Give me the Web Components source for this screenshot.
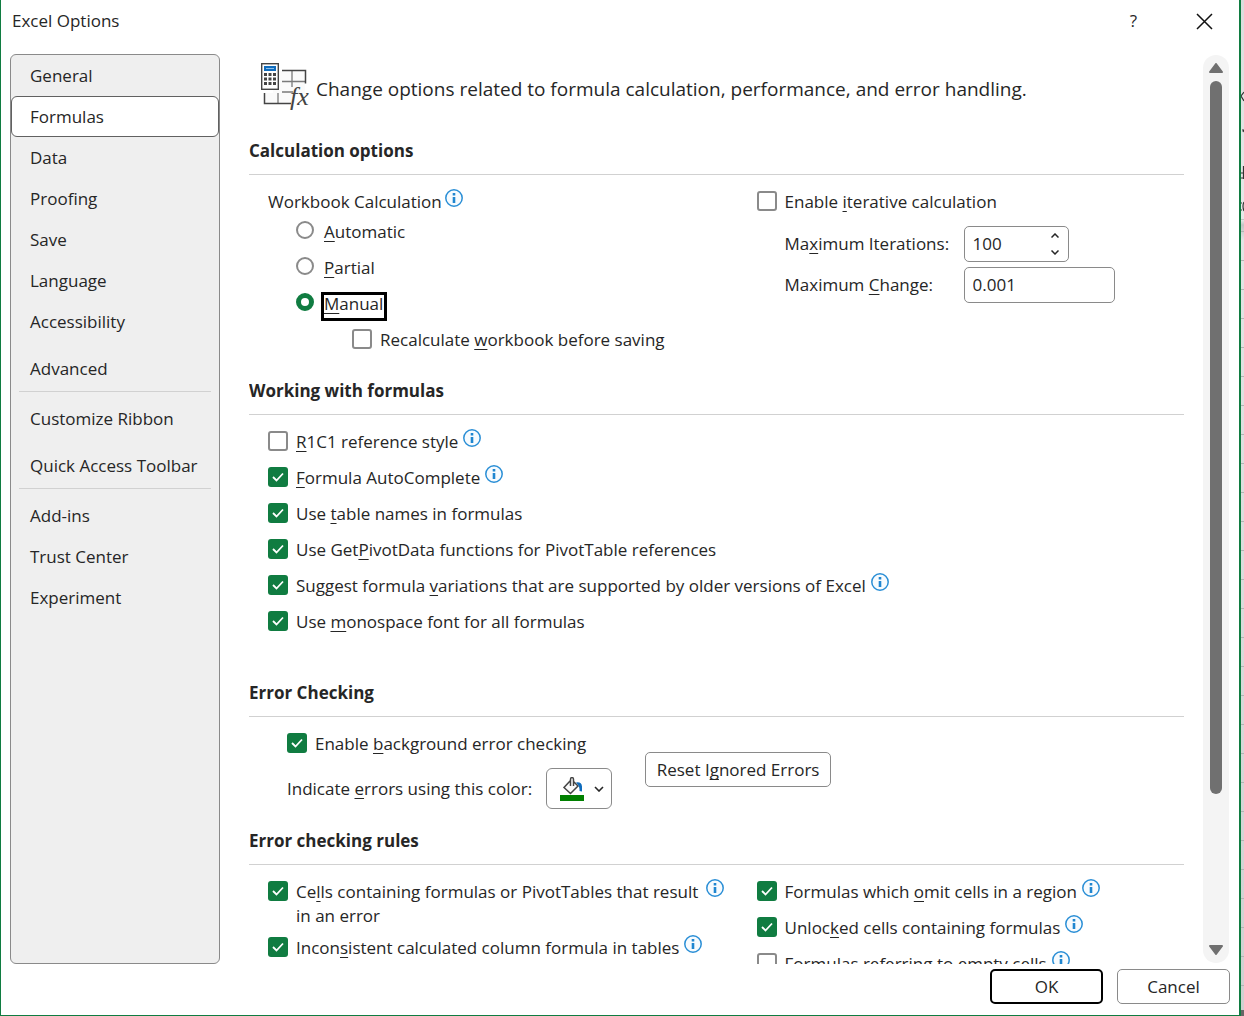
<!DOCTYPE html>
<html lang="en">
<head>
<meta charset="UTF-8">
<meta name="viewport" content="width=device-width, initial-scale=1">
<title>Excel Options</title>
<style>
    html, body {
        margin: 0;
        height: 100%;
    }

    body {
        --text: #262626;
        --green: #107c41;
        --line: #d1d1d1;
        --border: #8a8a8a;
        display: flex;
        overflow: hidden;
        background: #fff;
        color: var(--text);
        font: 17px/24px "Open Sans", "Noto Sans", sans-serif;
    }

    u {
        text-decoration-thickness: 1px;
        text-underline-offset: 3px;
        text-decoration-skip-ink: none;
    }
</style>
</head>
<body>

<options-window heading="Excel Options">
    <category-list slot="nav">
        <category-item>General</category-item>
        <category-item selected>Formulas</category-item>
        <category-item>Data</category-item>
        <category-item>Proofing</category-item>
        <category-item>Save</category-item>
        <category-item>Language</category-item>
        <category-item>Accessibility</category-item>
        <category-item group-end>Advanced</category-item>
        <category-item>Customize Ribbon</category-item>
        <category-item group-end>Quick Access Toolbar</category-item>
        <category-item>Add-ins</category-item>
        <category-item>Trust Center</category-item>
        <category-item>Experiment</category-item>
    </category-list>

    <page-intro>Change options related to formula calculation, performance, and error handling.</page-intro>

    <option-section heading="Calculation options" columns>
        <calculation-mode></calculation-mode>
        <iteration-settings slot="second"></iteration-settings>
    </option-section>

    <option-section heading="Working with formulas">
        <check-option info><u>R</u>1C1 reference style</check-option>
        <check-option checked info><u>F</u>ormula AutoComplete</check-option>
        <check-option checked>Use <u>t</u>able names in formulas</check-option>
        <check-option checked>Use Get<u>P</u>ivotData functions for PivotTable references</check-option>
        <check-option checked info>Suggest formula <u>v</u>ariations that are supported by older versions of Excel</check-option>
        <check-option checked>Use <u>m</u>onospace font for all formulas</check-option>
    </option-section>

    <option-section heading="Error Checking" spaced>
        <error-indicator></error-indicator>
    </option-section>

    <option-section heading="Error checking rules" columns>
        <check-option checked info>Ce<u>l</u>ls containing formulas or PivotTables that result in an error</check-option>
        <check-option checked info>Incon<u>s</u>istent calculated column formula in tables</check-option>
        <check-option slot="second" checked info>Formulas which <u>o</u>mit cells in a region</check-option>
        <check-option slot="second" checked info>Unloc<u>k</u>ed cells containing formulas</check-option>
        <check-option slot="second" info>Formulas referring to <u>e</u>mpty cells</check-option>
    </option-section>

    <dialog-button slot="actions" primary>OK</dialog-button>
    <dialog-button slot="actions">Cancel</dialog-button>
</options-window>

<sheet-edge></sheet-edge>

<script>
    // Rules shared by every shadow root
    const BASE = `
        :host, * { box-sizing: border-box; }
        button, input { font: inherit; color: inherit; }
        button { padding: 0; border: 0; background: none; }
        svg { display: block; }
        u {
            text-decoration-thickness: 1px;
            text-underline-offset: 3px;
            text-decoration-skip-ink: none;
        }
    `;

    class BaseElement extends HTMLElement {
        constructor() {
            super();
            this.attachShadow({mode: 'open'});
        }

        connectedCallback() {
            const template = document.createElement('template');
            template.innerHTML = `<style>${BASE}${this.styles()}</style>${this.markup()}`;
            this.shadowRoot.replaceChildren(template.content.cloneNode(true));
            this.ready();
        }

        styles() { return ''; }
        markup() { return '<slot></slot>'; }
        ready() {}
    }

    // Dialog frame: title bar, category list, scrolling page, actions
    class OptionsWindow extends BaseElement {
        styles() {
            return `
                :host {
                    flex: 1;
                    min-width: 0;
                    display: flex;
                    flex-direction: column;
                    border: solid var(--green);
                    border-width: 0 2px 1px 1px;
                    background: #fff;
                }
                header {
                    display: flex;
                    align-items: center;
                    height: 54px;
                    padding: 0 26px 12px 11px;
                }
                h1 { flex: 1; margin: 0; font-size: 17px; font-weight: 400; }
                header button {
                    display: grid;
                    place-items: center;
                    width: 17px;
                    height: 24px;
                    margin-left: 54px;
                }
                main { flex: 1; min-height: 0; display: flex; padding: 0 10px 0 9px; }
                .page {
                    flex: 1;
                    min-width: 0;
                    overflow: hidden;
                    margin: 0 19px 0 29px;
                }
                footer {
                    display: flex;
                    justify-content: flex-end;
                    gap: 14px;
                    padding: 5px 9px 11px;
                }
            `;
        }

        markup() {
            return `
                <header>
                    <h1>${this.getAttribute('heading')}</h1>
                    <button type="button" aria-label="Help">?</button>
                    <button type="button" aria-label="Close">
                        <svg width="17" height="17" viewBox="0 0 17 17" fill="none" stroke="#111" stroke-width="1.5"><path d="M1 1 16 16M16 1 1 16"/></svg>
                    </button>
                </header>
                <main>
                    <slot name="nav"></slot>
                    <div class="page"><slot></slot></div>
                    <page-scroller></page-scroller>
                </main>
                <footer><slot name="actions"></slot></footer>
            `;
        }
    }

    class CategoryList extends BaseElement {
        styles() {
            return `
                :host {
                    display: block;
                    flex: none;
                    width: 210px;
                    border: 1px solid var(--border);
                    border-radius: 6px;
                    background: #efefef;
                }
                nav { display: flex; flex-direction: column; }
            `;
        }

        markup() {
            return '<nav aria-label="Categories"><slot></slot></nav>';
        }
    }

    class CategoryItem extends BaseElement {
        styles() {
            return `
                :host { display: block; }
                :host([group-end]) {
                    margin: 0 8px 6px;
                    padding: 6px 0 2px;
                    border-bottom: 1px solid var(--line);
                }
                button {
                    display: block;
                    width: 100%;
                    height: 41px;
                    padding: 0 18px;
                    border: 1px solid transparent;
                    border-radius: 6px;
                    text-align: left;
                    white-space: nowrap;
                }
                :host([group-end]) button { padding: 0 10px; }
                :host([selected]) button { border-color: #616161; background: #fff; }
            `;
        }

        markup() {
            const current = this.hasAttribute('selected') ? 'aria-current="page"' : '';
            return `<button type="button" ${current}><slot></slot></button>`;
        }
    }

    class PageIntro extends BaseElement {
        styles() {
            return `
                :host {
                    display: flex;
                    align-items: center;
                    gap: 6px;
                    padding: 9px 0 28px 12px;
                    font-size: 19px;
                }
                svg { flex: none; }
                p { margin: 0; padding-top: 4px; white-space: nowrap; }
            `;
        }

        markup() {
            return `
                <svg width="49" height="48" viewBox="0 0 49 48" aria-hidden="true">
                    <path d="M12 8h32v23H34l-5 10H4V30h8z" fill="#fafafa"/>
                    <path d="M21 18.500h23M21 29h11M31 8v16M17 30v10" fill="none" stroke="#7a7a7a" stroke-width="1.300"/>
                    <path d="M21 7.500h23.500v13M3.500 30v10.500H30" fill="none" stroke="#444" stroke-width="1.500"/>
                    <rect x=".7" y=".7" width="16.600" height="25.600" fill="#fff" stroke="#444" stroke-width="1.400"/>
                    <rect x="3" y="3" width="12" height="5" fill="#0f6cbd"/>
                    <path d="M5 5.500h8" stroke="#8cc0ec"/>
                    <path d="M3 11.500h3M7.500 11.500h3M12 11.500h3M3 16h3M7.500 16h3M12 16h3M3 20.500h3M7.500 20.500h3M12 20.500h3" stroke="#444" stroke-width="3"/>
                    <text x="29" y="42" font-family="Liberation Serif, serif" font-style="italic" font-size="26" fill="#444">fx</text>
                </svg>
                <p><slot></slot></p>
            `;
        }
    }

    class OptionSection extends BaseElement {
        styles() {
            return `
                :host { display: block; margin-bottom: 15px; }
                :host([spaced]) { margin-top: 35px; }
                h2 {
                    margin: 0;
                    padding-bottom: 11px;
                    border-bottom: 1px solid var(--line);
                    font-size: 17px;
                    line-height: 24px;
                    font-weight: 700;
                }
                .body { padding: 15px 0 0 19px; }
                :host([columns]) .body { display: grid; grid-template-columns: 8fr 7fr; }
                :host([columns]) .first { padding-right: 33px; }
            `;
        }

        markup() {
            return `
                <section>
                    <h2>${this.getAttribute('heading')}</h2>
                    <div class="body">
                        <div class="first"><slot></slot></div>
                        <div><slot name="second"></slot></div>
                    </div>
                </section>
            `;
        }
    }

    class InfoTip extends BaseElement {
        styles() {
            return `
                :host { display: block; flex: none; margin-top: -1px; }
                button { display: block; width: 18px; height: 18px; }
            `;
        }

        markup() {
            return `
                <button type="button" aria-label="More information">
                    <svg width="18" height="18" viewBox="0 0 18 18">
                        <circle cx="9" cy="9" r="8.200" fill="#f7fbfe" stroke="#2b8fd6" stroke-width="1.500"/>
                        <path d="M9 4v2.500M9 8v6" stroke="#1f86d0" stroke-width="2.600"/>
                    </svg>
                </button>
            `;
        }
    }

    class CheckOption extends BaseElement {
        styles() {
            return `
                :host {
                    display: flex;
                    align-items: flex-start;
                    gap: 5px;
                    min-height: 36px;
                    padding-bottom: 8px;
                }
                label { display: flex; align-items: flex-start; gap: 8px; }
                .box { display: grid; padding-top: 1px; }
                .box > * { grid-area: 1 / 1; }
                input {
                    appearance: none;
                    width: 20px;
                    height: 20px;
                    margin: 0;
                    border: 2px solid var(--border);
                    border-radius: 3px;
                    background: #fff;
                }
                input:checked { border: 0; background: var(--green); }
                svg { visibility: hidden; pointer-events: none; }
                input:checked + svg { visibility: visible; }
            `;
        }

        markup() {
            const checked = this.hasAttribute('checked') ? 'checked' : '';
            const info = this.hasAttribute('info') ? '<info-tip></info-tip>' : '';
            return `
                <label>
                    <span class="box">
                        <input type="checkbox" ${checked}>
                        <svg width="20" height="20" viewBox="0 0 20 20" fill="none" stroke="#fff" stroke-width="1.800"><path d="m5 10 3.500 3.500 6.500-7"/></svg>
                    </span>
                    <span><slot></slot></span>
                </label>
                ${info}
            `;
        }
    }

    // The radios share one shadow root so that they form a single group
    class CalculationMode extends BaseElement {
        styles() {
            return `
                :host { display: block; }
                fieldset { margin: 0; padding: 0; border: 0; min-width: 0; }
                legend { display: flex; gap: 3px; height: 30px; padding: 0; }
                .modes { display: grid; justify-items: start; gap: 12px; padding: 0 0 12px 28px; }
                .modes label { display: flex; align-items: flex-start; gap: 7px; height: 24px; }
                .modes span { padding: 0 4px 5px 3px; }
                input {
                    appearance: none;
                    width: 18px;
                    height: 18px;
                    margin: 1px 0 0;
                    border: 2px solid var(--border);
                    border-radius: 50%;
                    background: #fff;
                }
                input:checked { border: 5px solid var(--green); }
                input:checked + span { outline: 3px solid #000; outline-offset: -3px; }
                check-option { padding-left: 84px; }
            `;
        }

        markup() {
            return `
                <fieldset>
                    <legend>Workbook Calculation<info-tip></info-tip></legend>
                    <div class="modes">
                        <label><input type="radio" name="mode"><span><u>A</u>utomatic</span></label>
                        <label><input type="radio" name="mode"><span><u>P</u>artial</span></label>
                        <label><input type="radio" name="mode" checked><span><u>M</u>anual</span></label>
                    </div>
                    <check-option>Recalculate <u>w</u>orkbook before saving</check-option>
                </fieldset>
            `;
        }
    }

    class IterationSettings extends BaseElement {
        styles() {
            return `
                :host { display: block; }
                .fields {
                    display: grid;
                    grid-template-columns: 179px 151px;
                    align-items: center;
                    gap: 5px 0;
                    padding-left: 28px;
                }
                .field {
                    display: flex;
                    height: 36px;
                    border: 1px solid var(--border);
                    border-radius: 5px;
                    background: #fff;
                }
                .number { width: 105px; }
                input {
                    appearance: textfield;
                    flex: 1;
                    min-width: 0;
                    padding: 0 8px;
                    border: 0;
                    background: none;
                }
                input::-webkit-inner-spin-button { display: none; }
                .steps { display: flex; flex-direction: column; width: 26px; }
                .steps button { flex: 1; display: grid; place-items: center; }
            `;
        }

        markup() {
            return `
                <check-option>Enable <u>i</u>terative calculation</check-option>
                <div class="fields">
                    <label for="iterations">Ma<u>x</u>imum Iterations:</label>
                    <div class="field number">
                        <input id="iterations" type="number" value="100">
                        <div class="steps">
                            <button type="button" aria-label="Increase" data-step="1">
                                <svg width="8" height="5" viewBox="0 0 8 5" fill="none" stroke="#262626" stroke-width="1.500"><path d="m.5 4.500 3.500-3.500 3.500 3.500"/></svg>
                            </button>
                            <button type="button" aria-label="Decrease" data-step="-1">
                                <svg width="8" height="5" viewBox="0 0 8 5" fill="none" stroke="#262626" stroke-width="1.500"><path d="m.5.5 3.500 3.500 3.500-3.500"/></svg>
                            </button>
                        </div>
                    </div>
                    <label for="change">Maximum <u>C</u>hange:</label>
                    <div class="field"><input id="change" type="text" value="0.001"></div>
                </div>
            `;
        }

        ready() {
            const input = this.shadowRoot.querySelector('#iterations');
            this.shadowRoot.querySelectorAll('[data-step]').forEach(button => {
                button.addEventListener('click', () => {
                    input.value = Number(input.value) + Number(button.dataset.step);
                });
            });
        }
    }

    class ErrorIndicator extends BaseElement {
        styles() {
            return `
                :host { display: flex; align-items: flex-start; gap: 33px; padding: 0 0 5px 19px; }
                .color { display: flex; align-items: center; gap: 14px; }
                .color button {
                    display: flex;
                    align-items: center;
                    gap: 10px;
                    width: 66px;
                    height: 41px;
                    padding-left: 13px;
                    border: 1px solid var(--border);
                    border-radius: 6px;
                    background: #fff;
                }
                dialog-button { margin-top: 20px; }
            `;
        }

        markup() {
            return `
                <div>
                    <check-option checked>Enable <u>b</u>ackground error checking</check-option>
                    <div class="color">
                        <label for="color">Indicate <u>e</u>rrors using this color:</label>
                        <button id="color" type="button" aria-haspopup="true">
                            <svg width="24" height="24" viewBox="0 0 24 24">
                                <path d="M10.500 3.500 4 10.500l6.500 6 7.500-7.500-4.500-4.500M10.500 9V2.500q0-2 1.500-2t1.500 2V9" fill="#fafafa" stroke="#444" stroke-width="1.500"/>
                                <path d="M16 5.500q5.500-1 6 4v5l-2.500-.5q.5-4.500-3.500-8.500z" fill="#0f6cbd"/>
                                <path d="M0 18h24v6H0z" fill="#008000"/>
                            </svg>
                            <svg width="10" height="6" viewBox="0 0 10 6" fill="none" stroke="#262626" stroke-width="1.600"><path d="m1 1 4 4 4-4"/></svg>
                        </button>
                    </div>
                </div>
                <dialog-button wide>Reset I<u>g</u>nored Errors</dialog-button>
            `;
        }
    }

    class DialogButton extends BaseElement {
        styles() {
            return `
                :host { display: block; }
                button {
                    min-width: 113px;
                    height: 35px;
                    padding: 0 10px;
                    border: 1px solid var(--border);
                    border-radius: 5px;
                    background: #fff;
                    white-space: nowrap;
                }
                :host([primary]) button { border: 2px solid #000; }
                :host([wide]) button { min-width: 186px; }
            `;
        }

        markup() {
            return '<button type="button"><slot></slot></button>';
        }
    }

    class PageScroller extends BaseElement {
        styles() {
            return `
                :host {
                    flex: none;
                    display: flex;
                    flex-direction: column;
                    align-items: center;
                    gap: 8px;
                    width: 26px;
                    margin: 1px 0;
                    padding: 8px 0;
                    border-radius: 13px;
                    background: #f4f4f4;
                }
                .track { flex: 1; display: flex; flex-direction: column; width: 12px; }
                .track::after { content: ""; flex: 1; }
                .thumb { flex: 5; border-radius: 6px; background: #707070; }
            `;
        }

        markup() {
            return `
                <button type="button" aria-label="Scroll up">
                    <svg width="14" height="10" viewBox="0 0 14 10" fill="#707070" stroke="#707070" stroke-width="2" stroke-linejoin="round"><path d="M1 9 7 1l6 8z"/></svg>
                </button>
                <div class="track"><div class="thumb"></div></div>
                <button type="button" aria-label="Scroll down">
                    <svg width="14" height="10" viewBox="0 0 14 10" fill="#707070" stroke="#707070" stroke-width="2" stroke-linejoin="round"><path d="M1 1 7 9l6-8z"/></svg>
                </button>
            `;
        }
    }

    // Sliver of the worksheet window that shows behind the dialog
    class SheetEdge extends BaseElement {
        styles() {
            return `
                :host {
                    flex: none;
                    width: 3px;
                    display: flex;
                    flex-direction: column;
                    background: linear-gradient(#dcdcdc, #e8e8e8 220px, #c4c4c4 225px, #e4e4e4 240px, #d0d0d0);
                }
                .ribbon { height: 220px; border-bottom: 1px solid #c4c4c4; }
                .rows {
                    flex: 1;
                    background: repeating-linear-gradient(transparent 0 11px, #b4b4b4 11px 12px, transparent 12px 29px);
                }
                .status { height: 6px; background: #666; }
            `;
        }

        markup() {
            return `
                <div class="ribbon">
                    <svg width="3" height="219" viewBox="0 0 3 219" fill="none" stroke="#333" stroke-width="1.200">
                        <path d="M3 92 0 96l3 5M1 130h2l-1 2M2.500 166v13M0 173h2M0 178h2M3 202q-2 4 0 9M0 203h1M0 210h1"/>
                    </svg>
                </div>
                <div class="rows"></div>
                <div class="status"></div>
            `;
        }
    }

    customElements.define('info-tip', InfoTip);
    customElements.define('check-option', CheckOption);
    customElements.define('dialog-button', DialogButton);
    customElements.define('page-scroller', PageScroller);
    customElements.define('category-item', CategoryItem);
    customElements.define('category-list', CategoryList);
    customElements.define('page-intro', PageIntro);
    customElements.define('calculation-mode', CalculationMode);
    customElements.define('iteration-settings', IterationSettings);
    customElements.define('error-indicator', ErrorIndicator);
    customElements.define('option-section', OptionSection);
    customElements.define('options-window', OptionsWindow);
    customElements.define('sheet-edge', SheetEdge);
</script>
</body>
</html>
